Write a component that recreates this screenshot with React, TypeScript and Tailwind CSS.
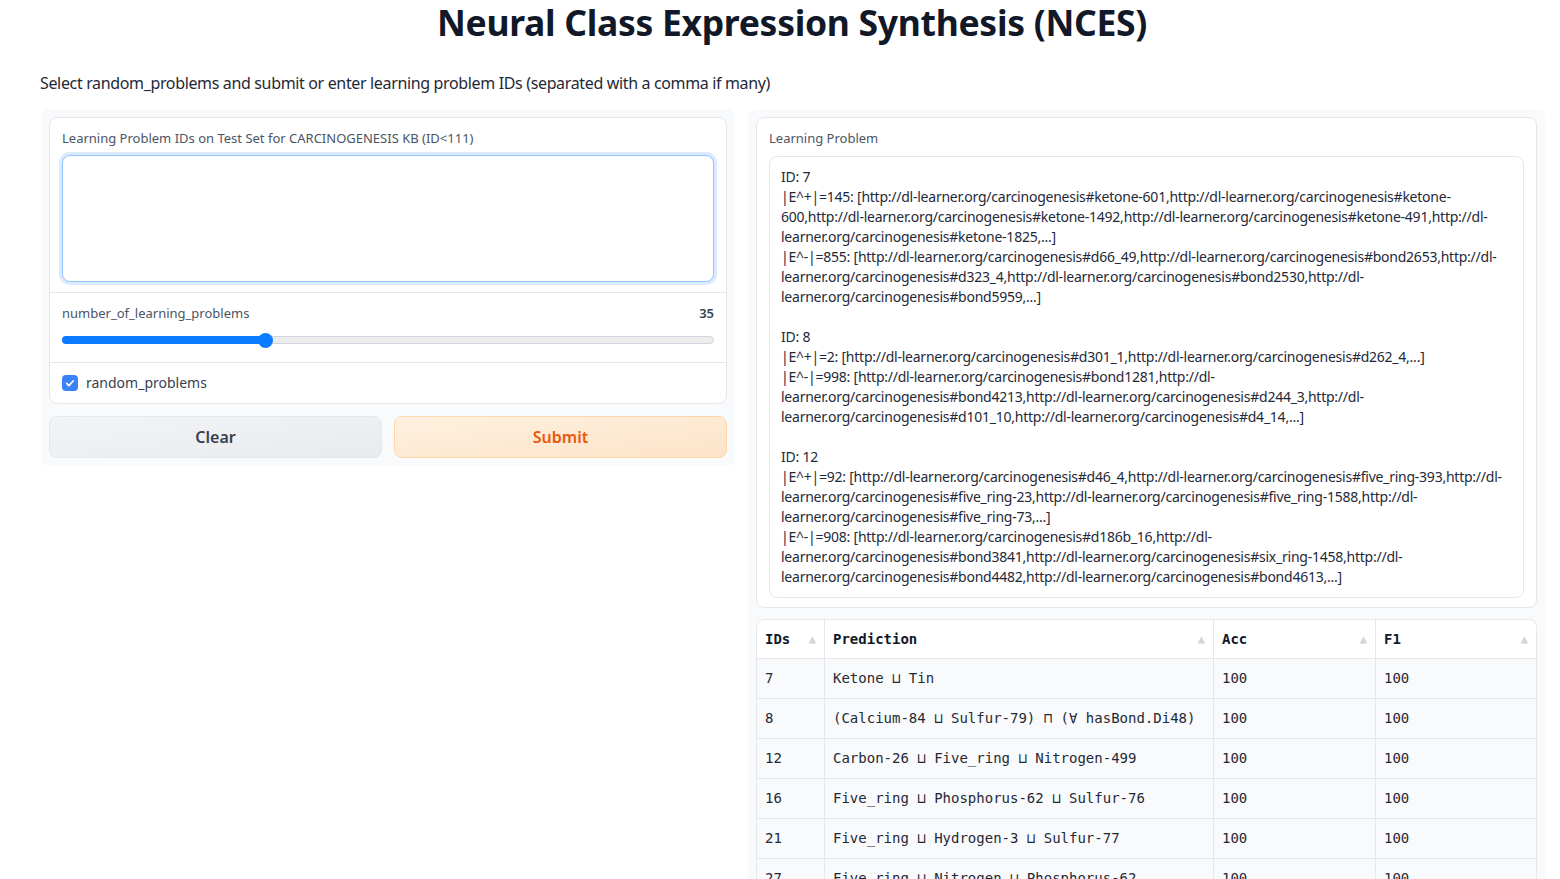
import React from "react";

const problemLines: string[] = [
  "ID: 7",
  "|E^+|=145: [http://dl-learner.org/carcinogenesis#ketone-601,http://dl-learner.org/carcinogenesis#ketone-",
  "600,http://dl-learner.org/carcinogenesis#ketone-1492,http://dl-learner.org/carcinogenesis#ketone-491,http://dl-",
  "learner.org/carcinogenesis#ketone-1825,...]",
  "|E^-|=855: [http://dl-learner.org/carcinogenesis#d66_49,http://dl-learner.org/carcinogenesis#bond2653,http://dl-",
  "learner.org/carcinogenesis#d323_4,http://dl-learner.org/carcinogenesis#bond2530,http://dl-",
  "learner.org/carcinogenesis#bond5959,...]",
  "",
  "ID: 8",
  "|E^+|=2: [http://dl-learner.org/carcinogenesis#d301_1,http://dl-learner.org/carcinogenesis#d262_4,...]",
  "|E^-|=998: [http://dl-learner.org/carcinogenesis#bond1281,http://dl-",
  "learner.org/carcinogenesis#bond4213,http://dl-learner.org/carcinogenesis#d244_3,http://dl-",
  "learner.org/carcinogenesis#d101_10,http://dl-learner.org/carcinogenesis#d4_14,...]",
  "",
  "ID: 12",
  "|E^+|=92: [http://dl-learner.org/carcinogenesis#d46_4,http://dl-learner.org/carcinogenesis#five_ring-393,http://dl-",
  "learner.org/carcinogenesis#five_ring-23,http://dl-learner.org/carcinogenesis#five_ring-1588,http://dl-",
  "learner.org/carcinogenesis#five_ring-73,...]",
  "|E^-|=908: [http://dl-learner.org/carcinogenesis#d186b_16,http://dl-",
  "learner.org/carcinogenesis#bond3841,http://dl-learner.org/carcinogenesis#six_ring-1458,http://dl-",
  "learner.org/carcinogenesis#bond4482,http://dl-learner.org/carcinogenesis#bond4613,...]",
];

const rows = [
  { id: "7", pred: "Ketone ⊔ Tin", acc: "100", f1: "100" },
  { id: "8", pred: "(Calcium-84 ⊔ Sulfur-79) ⊓ (∀ hasBond.Di48)", acc: "100", f1: "100" },
  { id: "12", pred: "Carbon-26 ⊔ Five_ring ⊔ Nitrogen-499", acc: "100", f1: "100" },
  { id: "16", pred: "Five_ring ⊔ Phosphorus-62 ⊔ Sulfur-76", acc: "100", f1: "100" },
  { id: "21", pred: "Five_ring ⊔ Hydrogen-3 ⊔ Sulfur-77", acc: "100", f1: "100" },
  { id: "27", pred: "Five_ring ⊔ Nitrogen ⊔ Phosphorus-62", acc: "100", f1: "100" },
];

const cols = [
  { label: "IDs", w: "w-[67px]" },
  { label: "Prediction", w: "w-[389px]" },
  { label: "Acc", w: "w-[162px]" },
  { label: "F1", w: "flex-1" },
];

function SortArrow() {
  return <span className="text-[12px] text-gray-300 leading-none">▲</span>;
}

export default function App() {
  return (
    <div className="min-h-screen bg-white font-['Noto_Sans',sans-serif] text-gray-800">
      <h1 className="pl-[24px] text-center text-[35.5px] font-bold leading-[44px] text-[#111827] tracking-[-0.3px]">
        Neural Class Expression Synthesis (NCES)
      </h1>
      <p className="mt-[27px] pl-[40px] text-[16px] leading-[24px] tracking-[-0.35px] text-[#1f2937]">
        Select random_problems and submit or enter learning problem IDs (separated with a comma if many)
      </p>

      <div className="mt-[14px] flex items-start gap-[13px] pl-[41px]">
        {/* left column */}
        <div className="w-[694px] rounded-lg bg-[#f9fafb] p-2">
          <div className="rounded-lg border border-gray-200 bg-white">
            <div className="px-3 pt-[11px] pb-[10px]">
              <div className="text-[13px] leading-[18px] text-[#4b5563]">
                Learning Problem IDs on Test Set for CARCINOGENESIS KB (ID&lt;111)
              </div>
              <textarea
                className="mt-[8px] block h-[127px] w-full resize-none rounded-lg border border-[#93c5fd] bg-white outline-none ring-[3px] ring-[#dbeafe]"
                defaultValue=""
              />
            </div>
            <div className="border-t border-gray-200 px-3 pt-[11px] pb-[18px]">
              <div className="flex items-center justify-between text-[13px] leading-[18px]">
                <span className="text-[#4b5563]">number_of_learning_problems</span>
                <span className="font-semibold text-[#374151]">35</span>
              </div>
              <div className="relative mt-[14px] h-[8px]">
                <div className="absolute inset-0 rounded-full border border-gray-300 bg-[#ececec]" />
                <div className="absolute left-0 top-0 h-[8px] w-[204px] rounded-full bg-[#0b7bff]" />
                <div className="absolute top-[-3.5px] left-[196px] h-[15px] w-[15px] rounded-full bg-[#0b7bff]" />
              </div>
            </div>
            <div className="flex items-center gap-2 border-t border-gray-200 px-3 py-[11px]">
              <span className="flex h-[16px] w-[16px] items-center justify-center rounded-[4px] bg-[#3b82f6]">
                <svg viewBox="0 0 16 16" className="h-[12px] w-[12px]" fill="none" stroke="white" strokeWidth="2.2" strokeLinecap="round" strokeLinejoin="round">
                  <path d="M3.5 8.5l3 3 6-6.5" />
                </svg>
              </span>
              <span className="text-[14px] leading-[18px] text-[#374151]">random_problems</span>
            </div>
          </div>
          <div className="mt-3 flex gap-3">
            <button className="h-[42px] flex-1 rounded-lg border border-gray-200 bg-gradient-to-br from-[#f3f4f6] to-[#e9eaee] text-[16px] font-semibold text-[#374151]">
              Clear
            </button>
            <button className="h-[42px] flex-1 rounded-lg border border-[#fed7aa] bg-gradient-to-br from-[#fff1e0] to-[#fde3c8] text-[16px] font-semibold text-[#ea580c]">
              Submit
            </button>
          </div>
        </div>

        {/* right column */}
        <div className="w-[797px] rounded-lg bg-[#f9fafb] p-2 pb-6">
          <div className="rounded-lg border border-gray-200 bg-white px-3 pt-[11px] pb-[9px]">
            <div className="text-[13px] leading-[18px] text-[#4b5563]">Learning Problem</div>
            <div className="mt-[9px] rounded-lg border border-gray-200 px-[11px] pt-[10px] pb-[10px] text-[14px] leading-[20px] tracking-[-0.24px] text-[#1f2937]">
              {problemLines.map((line, i) => (
                <div key={i} className="h-[20px] whitespace-nowrap">
                  {line}
                </div>
              ))}
            </div>
          </div>

          <div className="mt-[11px] overflow-hidden rounded-lg border border-gray-200 font-['DejaVu_Sans_Mono',monospace] text-[14px]">
            <div className="flex h-[38px] bg-white font-bold text-[#111827]">
              {cols.map((c, i) => (
                <div
                  key={c.label}
                  className={`${c.w} flex items-center justify-between px-2 ${i > 0 ? "border-l border-gray-200" : ""}`}
                >
                  <span>{c.label}</span>
                  <SortArrow />
                </div>
              ))}
            </div>
            {rows.map((r) => (
              <div key={r.id} className="flex h-[40px] border-t border-gray-200 bg-[#f9fafb] text-[#1f2937]">
                <div className="flex w-[67px] items-center px-2">{r.id}</div>
                <div className="flex w-[389px] items-center border-l border-gray-200 px-2">{r.pred}</div>
                <div className="flex w-[162px] items-center border-l border-gray-200 px-2">{r.acc}</div>
                <div className="flex flex-1 items-center border-l border-gray-200 px-2">{r.f1}</div>
              </div>
            ))}
          </div>
        </div>
      </div>
    </div>
  );
}
